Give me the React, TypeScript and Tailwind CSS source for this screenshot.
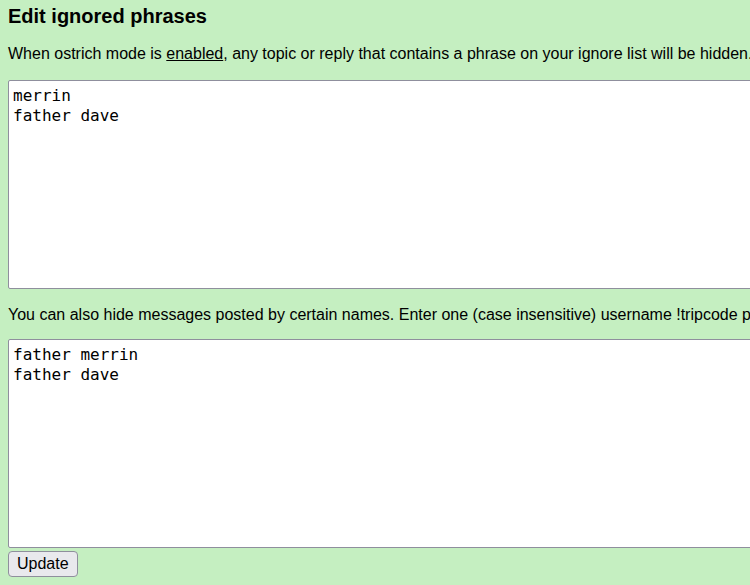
export default function App() {
  return (
    <div className="w-[750px] h-[585px] overflow-hidden bg-[#c5efc1] text-black font-['Liberation_Sans',Arial,sans-serif]">
      <div className="w-[1000px] px-2 pt-[5px]">
        <h3 className="text-[20px] font-bold leading-[23px]">Edit ignored phrases</h3>
        <p className="mt-[17px] text-[16px] leading-[18px] whitespace-nowrap">
          When ostrich mode is <span className="underline">enabled</span>, any topic or reply that contains a phrase on your ignore list will be hidden. Enter one phrase per line.
        </p>
        <textarea
          className="block mt-[17px] w-[900px] h-[209px] resize-none bg-white border border-[#8f8f9d] rounded-[2px] px-1 py-[5px] text-[16px] leading-[20px] font-['DejaVu_Sans_Mono',monospace] outline-none"
          defaultValue={'merrin\nfather dave'}
        />
        <p className="mt-[17px] text-[16px] leading-[18px] whitespace-nowrap">
          You can also hide messages posted by certain names. Enter one (case insensitive) username !tripcode per line.
        </p>
        <textarea
          className="block mt-[15px] w-[900px] h-[209px] resize-none bg-white border border-[#8f8f9d] rounded-[2px] px-1 py-[5px] text-[16px] leading-[20px] font-['DejaVu_Sans_Mono',monospace] outline-none"
          defaultValue={'father merrin\nfather dave'}
        />
        <button className="mt-[3px] h-[26px] px-[8px] bg-[#e9e9ed] border border-[#8f8f9d] rounded-[4px] text-[16px] leading-[18px]">
          Update
        </button>
      </div>
    </div>
  )
}
